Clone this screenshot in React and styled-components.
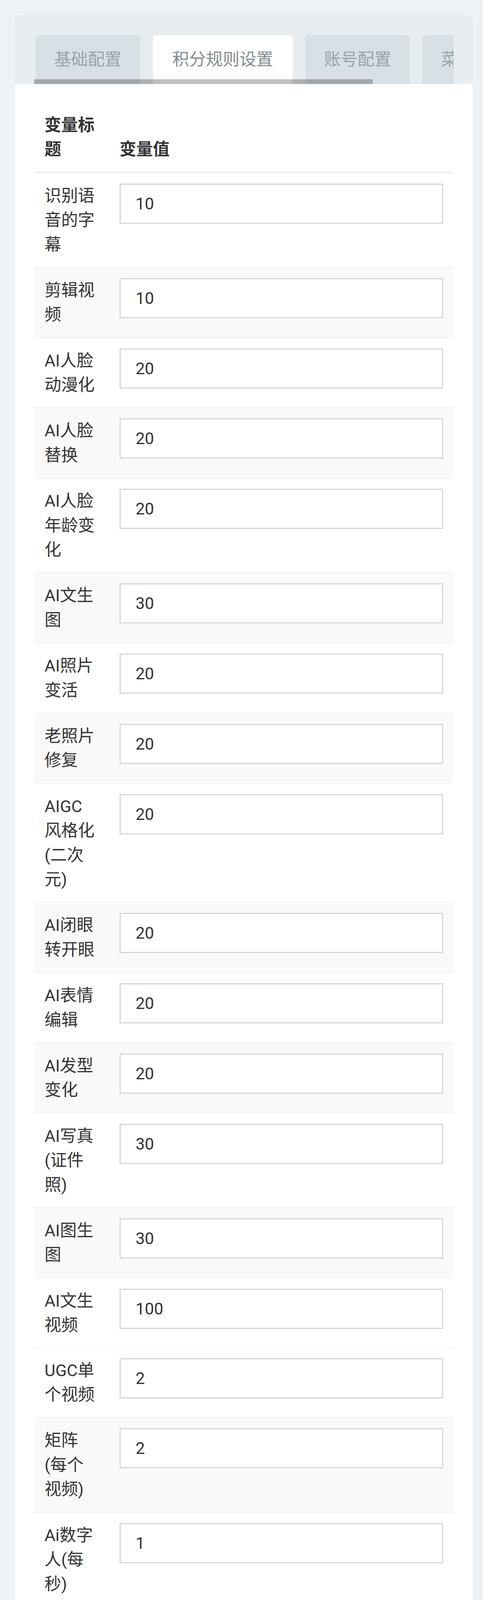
import React from 'react';
import styled, { createGlobalStyle } from 'styled-components';

const GlobalStyle = createGlobalStyle`
  html, body { margin: 0; padding: 0; background: #eef2f5; }
  body {
    font-family: Roboto, "Noto Sans CJK SC", "Noto Sans", sans-serif;
    color: #333;
  }
  * { box-sizing: border-box; }
`;

const Page = styled.div`
  padding: 39px 27px 0 39px;
`;

const Card = styled.div`
  background: #fff;
  border-radius: 8px;
  overflow: hidden;
`;

const TabHeader = styled.div`
  background: #e7ecef;
  padding: 51px 48px 0;
`;

const TabBar = styled.div`
  position: relative;
  display: flex;
  gap: 32px;
  padding-left: 4px;
  overflow: hidden;
`;

const Tab = styled.div`
  flex: none;
  height: 125px;
  padding: 0 ${(p) => (p.$active ? 50 : 48)}px;
  display: flex;
  align-items: center;
  border-radius: 8px 8px 0 0;
  background: ${(p) => (p.$active ? '#ffffff' : '#d8dfe5')};
  color: ${(p) => (p.$active ? '#7f8c8d' : '#95a5a6')};
  font-size: 43px;
  line-height: 1;
  white-space: nowrap;
`;

const ScrollThumb = styled.div`
  position: absolute;
  left: 0;
  bottom: 0;
  width: 867px;
  height: 12px;
  background: rgba(0, 0, 0, 0.25);
`;

const Body = styled.div`
  padding: 48px 48px 48px;
`;

const Table = styled.table`
  width: 100%;
  border-collapse: collapse;
  table-layout: fixed;
  font-size: 42.7px;
  line-height: 62.5px;
`;

const Col = styled.col`
  width: ${(p) => p.$w || 'auto'};
`;

const HeadCell = styled.th`
  text-align: left;
  font-weight: 700;
  color: #333;
  vertical-align: bottom;
  padding: 25.5px ${(p) => (p.$label ? '33px' : '27px')} 25.5px 27px;
  border-bottom: 5.5px solid #f2f2f2;
`;

const Row = styled.tr`
  background: ${(p) => (p.$striped ? '#f9f9f9' : '#ffffff')};
`;

const Cell = styled.td`
  vertical-align: top;
  padding: ${(p) => (p.$striped ? '27.25px' : '25.5px')}
    ${(p) => (p.$label ? '33px' : '27px')}
    ${(p) => (p.$striped ? '27.25px' : '25.5px')} 27px;
  border-bottom: 2px solid #f2f2f2;
  color: #333;
  word-break: normal;
`;

const ValueInput = styled.input`
  display: block;
  width: 100%;
  height: 103px;
  margin: 0;
  border: 3px solid #d4d7dd;
  border-radius: 0;
  background: #fff;
  padding: 0 38px;
  font-family: inherit;
  font-size: 42px;
  color: #333;
  outline: none;
`;

const Actions = styled.div`
  display: flex;
  gap: 13px;
  padding-left: 219px;
  margin-top: 27px;
`;

const Button = styled.button`
  height: 100px;
  width: ${(p) => (p.$primary ? '164px' : '162px')};
  border-radius: 50px;
  border: ${(p) => (p.$primary ? 'none' : '3px solid #dcdcdc')};
  background: ${(p) => (p.$primary ? '#698cfd' : '#f3f3f3')};
  color: ${(p) => (p.$primary ? '#ffffff' : '#333333')};
  font-family: inherit;
  font-size: 42.7px;
  padding: 0;
  cursor: pointer;
`;

const tabs = ['基础配置', '积分规则设置', '账号配置', '菜单配置'];

const rows = [
  ['识别语音的字幕', '10', false],
  ['剪辑视频', '10', true],
  ['AI人脸动漫化', '20', false],
  ['AI人脸替换', '20', true],
  ['AI人脸年龄变化', '20', false],
  ['AI文生图', '30', true],
  ['AI照片变活', '20', false],
  ['老照片修复', '20', true],
  ['AIGC风格化(二次元)', '20', false],
  ['AI闭眼转开眼', '20', true],
  ['AI表情编辑', '20', false],
  ['AI发型变化', '20', true],
  ['AI写真(证件照)', '30', false],
  ['AI图生图', '30', true],
  ['AI文生视频', '100', false],
  ['UGC单个视频', '2', false],
  ['矩阵(每个视频)', '2', true],
  ['Ai数字人(每秒)', '1', false],
  ['Ai数字人合成快速(每秒)', '8', true],
  ['Ai数字人合成慢速(每秒)', '2', false],
  ['Ai数字人克隆形象(每个)', '100', true],
  ['Ai数字人克隆声音(每个)', '50', false],
  ['Ai数字人合成声音(每个)', '10', true],
];

export default function App() {
  return (
    <>
      <GlobalStyle />
      <Page>
        <Card>
          <TabHeader>
            <TabBar>
              {tabs.map((t, i) => (
                <Tab key={t} $active={i === 1}>
                  {t}
                </Tab>
              ))}
              <ScrollThumb />
            </TabBar>
          </TabHeader>
          <Body>
            <Table>
              <colgroup>
                <Col $w="192px" />
                <Col />
              </colgroup>
              <thead>
                <tr>
                  <HeadCell $label>变量标题</HeadCell>
                  <HeadCell>变量值</HeadCell>
                </tr>
              </thead>
              <tbody>
                {rows.map(([label, value, striped]) => (
                  <Row key={label} $striped={striped}>
                    <Cell $label $striped={striped}>
                      {label}
                    </Cell>
                    <Cell $striped={striped}>
                      <ValueInput type="text" defaultValue={value} />
                    </Cell>
                  </Row>
                ))}
              </tbody>
            </Table>
            <Actions>
              <Button $primary>确定</Button>
              <Button>重置</Button>
            </Actions>
          </Body>
        </Card>
      </Page>
    </>
  );
}
